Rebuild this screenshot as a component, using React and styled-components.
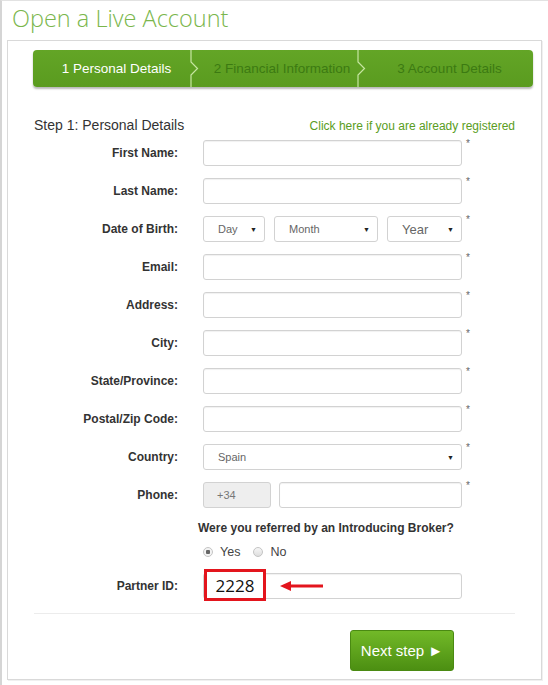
import React from 'react';
import styled, { createGlobalStyle } from 'styled-components';

const GlobalStyle = createGlobalStyle`
    html, body {
        margin: 0;
        padding: 0;
        background: #fff;
    }
    * { box-sizing: border-box; }
`

const steps = [
    { label: '1 Personal Details', width: 157, shift: 10, active: true },
    { label: '2 Financial Information', width: 158, shift: 8 },
    { label: '3 Account Details', width: 167, shift: 0 },
];

function Chevron() {
    return (
        <Sep width="9" height="37" viewBox="0 0 9 37">
            <path d="M1 0 V12 L7.5 18.5 L1 25 V37" fill="none" stroke="#c7e6a2" strokeWidth="1.2" />
        </Sep>
    );
}

function Select({ value, w, big }) {
    return (
        <SelectBox $w={w}>
            <SelectText $big={big}>{value}</SelectText>
            <Caret>▼</Caret>
        </SelectBox>
    );
}

function Field({ label, children, required = true }) {
    return (
        <Row>
            <Label>{label}</Label>
            <Control>{children}</Control>
            <Star>{required ? '*' : ''}</Star>
        </Row>
    );
}

function App() {
    return (
        <>
            <GlobalStyle />
            <Page>
                <Title>Open a Live Account</Title>
                <Box>
                    <Stepper>
                        {steps.map((s, i) => (
                            <React.Fragment key={s.label}>
                                {i > 0 && <Chevron />}
                                <Step $w={s.width} $shift={s.shift} $active={s.active}>{s.label}</Step>
                            </React.Fragment>
                        ))}
                    </Stepper>

                    <Heading>
                        <h2>Step 1: Personal Details</h2>
                        <a>Click here if you are already registered</a>
                    </Heading>

                    <Form>
                        <Field label="First Name:"><Input /></Field>
                        <Field label="Last Name:"><Input /></Field>
                        <Field label="Date of Birth:">
                            <Split>
                                <Select value="Day" w={62} />
                                <Select value="Month" w={104} />
                                <Select value="Year" w={75} big />
                            </Split>
                        </Field>
                        <Field label="Email:"><Input /></Field>
                        <Field label="Address:"><Input /></Field>
                        <Field label="City:"><Input /></Field>
                        <Field label="State/Province:"><Input /></Field>
                        <Field label="Postal/Zip Code:"><Input /></Field>
                        <Field label="Country:"><Select value="Spain" w={259} /></Field>
                        <Field label="Phone:">
                            <Split>
                                <Prefix>+34</Prefix>
                                <Input />
                            </Split>
                        </Field>
                    </Form>

                    <Question>Were you referred by an Introducing Broker?</Question>
                    <Radios>
                        <Option><Radio $checked />Yes</Option>
                        <Option><Radio />No</Option>
                    </Radios>

                    <PartnerRow>
                        <Field label="Partner ID:" required={false}>
                            <Partner>
                                <Input />
                                <Mark>2228</Mark>
                                <Arrow width="44" height="10" viewBox="0 0 44 10">
                                    <line x1="9" y1="5" x2="43" y2="5" stroke="#e3151d" strokeWidth="3" />
                                    <polygon points="0,5 11,0 11,10" fill="#e3151d" />
                                </Arrow>
                            </Partner>
                        </Field>
                    </PartnerRow>

                    <Divider />
                    <Footer>
                        <NextButton>Next step ►</NextButton>
                    </Footer>
                </Box>
            </Page>
        </>
    );
}

export default App;

const Page = styled.div`
    width: 548px;
    height: 685px;
    border-left: 2px solid #d5d5d5;
    border-top: 1px solid #e2e2e2;
    font-family: "Liberation Sans", Arial, sans-serif;
    color: #333;
`

const Title = styled.h1`
    margin: 0;
    height: 39px;
    padding: 2px 0 0 10px;
    font-family: "Open Sans", sans-serif;
    font-weight: 300;
    font-size: 23.5px;
    line-height: 30px;
    color: #7ab64c;
`

const Box = styled.div`
    margin-left: 5px;
    width: 535px;
    height: 640px;
    border: 1px solid #d9d9d9;
    box-shadow: 1px 1px 0 #f0f0f0;
    padding-top: 9px;
`

const Stepper = styled.div`
    display: flex;
    margin-left: 25px;
    width: 500px;
    height: 37px;
    background: linear-gradient(#63a526, #5a9b1f);
    border-radius: 4px;
    box-shadow: 0 2px 2px rgba(0, 0, 0, 0.28);
`

const Step = styled.div`
    width: ${p => p.$w}px;
    display: flex;
    align-items: center;
    justify-content: center;
    padding-left: ${p => p.$shift}px;
    font-size: 13.5px;
    color: ${p => p.$active ? '#fff' : '#3c7a12'};
`

const Sep = styled.svg`
    flex: none;
    display: block;
`

const Heading = styled.div`
    display: flex;
    justify-content: space-between;
    align-items: baseline;
    margin-top: 29px;
    padding: 0 26px 0 26px;

    & > h2 {
        margin: 0;
        font-size: 14px;
        font-weight: normal;
        line-height: 18px;
        color: #333;
    }

    & > a {
        font-size: 12px;
        color: #5a9d22;
    }
`

const Form = styled.div`
    display: flex;
    flex-direction: column;
    gap: 12px;
    margin-top: 6px;
`

const Row = styled.div`
    display: grid;
    grid-template-columns: 170px 259px 20px;
    column-gap: 25px;
    align-items: center;
`

const Label = styled.div`
    text-align: right;
    font-size: 12px;
    font-weight: bold;
    color: #333;
`

const Control = styled.div`
    height: 26px;
    display: flex;
`

const Star = styled.div`
    align-self: start;
    margin-left: -21px;
    margin-top: -2px;
    font-size: 10px;
    color: #666;
`

const Input = styled.div`
    flex: 1;
    height: 26px;
    border: 1px solid #d2d2d2;
    border-radius: 3px;
    background: #fff;
    box-shadow: inset 0 1px 1px rgba(0, 0, 0, 0.06);
`

const Split = styled.div`
    display: flex;
    justify-content: space-between;
    gap: 8px;
    width: 100%;
`

const SelectBox = styled.div`
    width: ${p => p.$w}px;
    flex: none;
    height: 26px;
    display: flex;
    align-items: center;
    justify-content: space-between;
    padding: 0 7px 0 14px;
    border: 1px solid #d2d2d2;
    border-radius: 3px;
    background: #fff;
`

const SelectText = styled.span`
    font-size: ${p => p.$big ? '13px' : '11px'};
    color: #666;
`

const Caret = styled.span`
    font-size: 7px;
    color: #222;
`

const Prefix = styled.div`
    width: 68px;
    flex: none;
    height: 26px;
    display: flex;
    align-items: center;
    padding-left: 13px;
    font-size: 11px;
    color: #777;
    background: #eeeeee;
    border: 1px solid #d2d2d2;
    border-radius: 3px;
`

const Question = styled.div`
    margin-top: 13px;
    padding-left: 190px;
    font-size: 12px;
    font-weight: bold;
    line-height: 14px;
    color: #333;
`

const Radios = styled.div`
    display: flex;
    align-items: center;
    gap: 13px;
    margin-top: 10px;
    padding-left: 195px;
    height: 14px;
`

const Option = styled.label`
    display: flex;
    align-items: center;
    gap: 7px;
    font-size: 12.5px;
    color: #444;
`

const Radio = styled.i`
    width: 10px;
    height: 10px;
    border-radius: 50%;
    border: 1px solid #c4c4c4;
    background: ${p => p.$checked
        ? 'radial-gradient(circle, #666 0 2px, #f3f3f3 2.5px)'
        : 'linear-gradient(#f6f6f6, #dedede)'};
`

const PartnerRow = styled.div`
    margin-top: 14px;
`

const Partner = styled.div`
    position: relative;
    flex: 1;
    display: flex;
`

const Mark = styled.div`
    position: absolute;
    left: 1px;
    top: -4px;
    width: 62px;
    height: 32px;
    border: 3px solid #e3151d;
    background: #fff;
    display: flex;
    align-items: center;
    justify-content: center;
    font-family: "Open Sans", sans-serif;
    font-size: 17px;
    color: #111;
`

const Arrow = styled.svg`
    position: absolute;
    left: 77px;
    top: 8px;
`

const Divider = styled.div`
    margin: 14px 26px 0 26px;
    border-top: 1px solid #ececec;
`

const Footer = styled.div`
    display: flex;
    justify-content: flex-end;
    padding: 16px 87px 0 0;
`

const NextButton = styled.button`
    width: 104px;
    height: 41px;
    border: 1px solid #4a8a12;
    border-radius: 3px;
    background: linear-gradient(#72b928, #4c8f12);
    color: #fff;
    font-family: "Liberation Sans", Arial, sans-serif;
    font-size: 15px;
    cursor: pointer;
`
